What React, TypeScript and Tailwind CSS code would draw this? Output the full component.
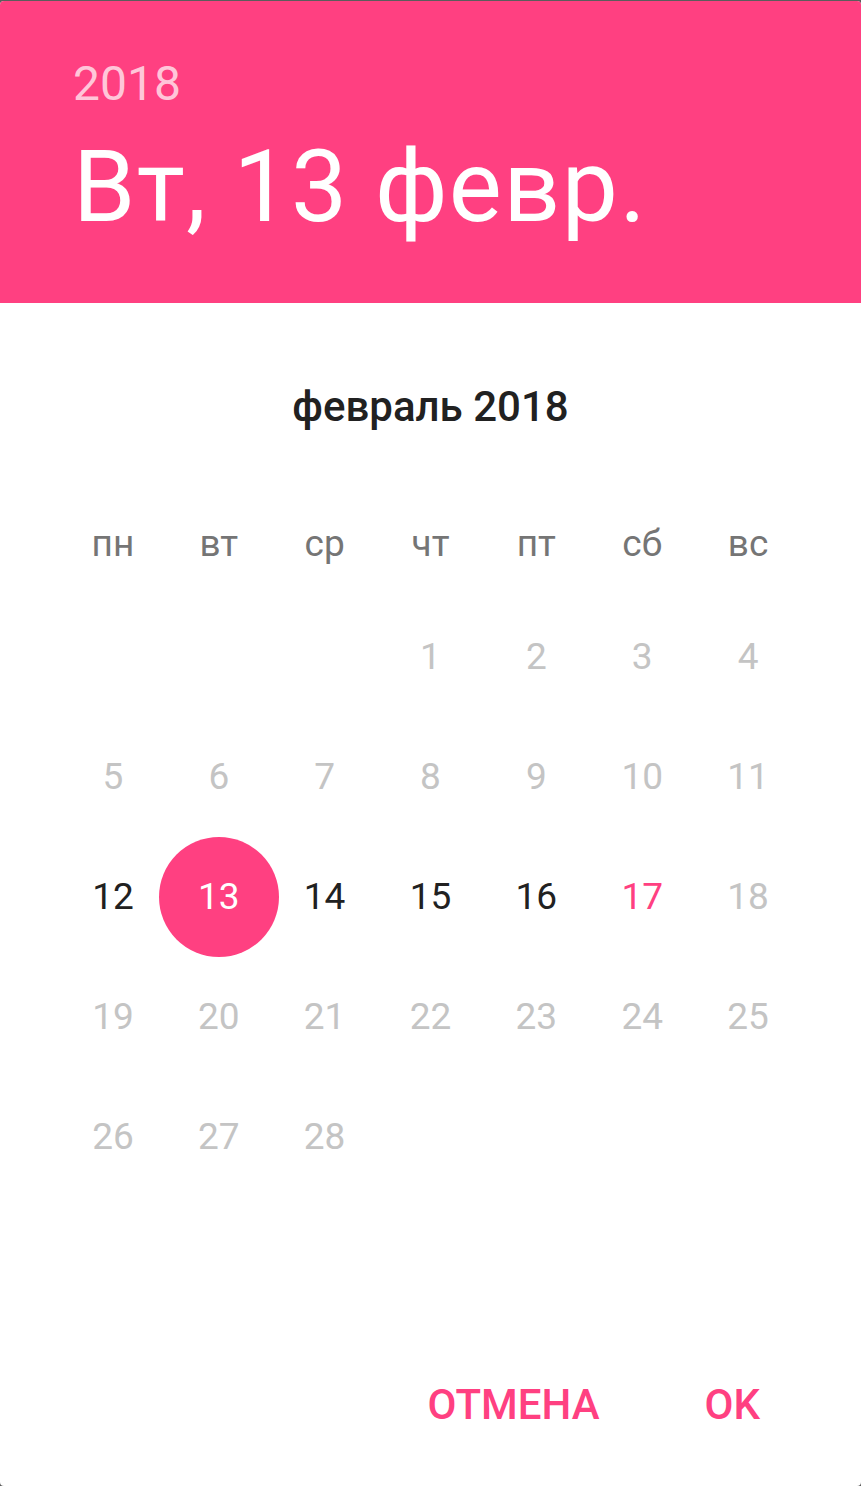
import React from "react";

const weekDays = ["пн", "вт", "ср", "чт", "пт", "сб", "вс"];

// февраль 2018 starts on Thursday
const cells: (number | null)[] = [null, null, null, ...Array.from({ length: 28 }, (_, i) => i + 1)];

const dayColor = (day: number) => {
  if (day === 17) return "text-[#ff4081]";
  if (day >= 12 && day <= 16) return "text-[#212121]";
  return "text-[#c4c4c4]";
};

const App = () => {
  return (
    <div className="w-[861px] h-[1486px] bg-[#5c5c5c] pt-px font-['Roboto',sans-serif]">
      <div className="h-[1485px] bg-white rounded-[4px] overflow-hidden flex flex-col">
        <div className="h-[302px] bg-[#ff4081] pl-[73px] pt-[55px] shrink-0">
          <div className="text-[48px] leading-[56px] text-[#ffc6d9]">2018</div>
          <div className="mt-[20px] text-[100px] leading-[110px] tracking-[1.4px] text-white">Вт, 13 февр.</div>
        </div>

        <div className="mt-[79px] text-center text-[42px] leading-[50px] font-medium text-[#212121]">
          февраль 2018
        </div>

        <div className="mt-[90px] mx-[60px] grid grid-cols-7">
          {weekDays.map((d) => (
            <div key={d} className="text-center text-[37px] leading-[44px] text-[#757575]">
              {d}
            </div>
          ))}
        </div>

        <div className="mt-[31px] mx-[60px] grid grid-cols-7">
          {cells.map((day, i) => (
            <div key={i} className="h-[120px] flex items-center justify-center">
              {day === 13 ? (
                <div className="w-[120px] h-[120px] shrink-0 rounded-full bg-[#ff4081] flex items-center justify-center text-[37px] text-white">
                  13
                </div>
              ) : day ? (
                <span className={`text-[37px] leading-[50px] ${dayColor(day)}`}>{day}</span>
              ) : null}
            </div>
          ))}
        </div>

        <div className="mt-[183px] flex justify-end gap-[105px] pr-[101px]">
          <button className="text-[42px] leading-[50px] font-medium text-[#ff4081]">ОТМЕНА</button>
          <button className="text-[42px] leading-[50px] font-medium text-[#ff4081]">OK</button>
        </div>
      </div>
    </div>
  );
};

export default App;
